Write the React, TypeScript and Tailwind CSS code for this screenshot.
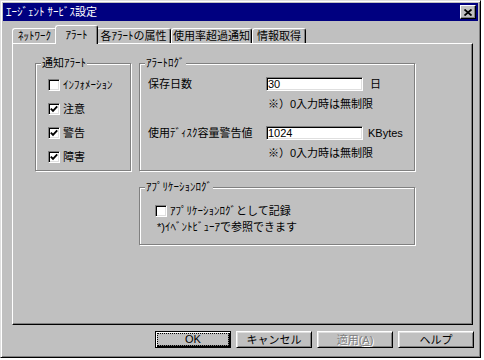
import type { ReactNode } from 'react';

const font = "font-['Liberation_Sans','Noto_Sans_CJK_JP',sans-serif]";

function Check({ checked }: { checked?: boolean }) {
  return (
    <span className="flex h-[12px] w-[12px] shrink-0 items-center justify-center border border-t-[#808080] border-l-[#808080] border-r-white border-b-white bg-white shadow-[inset_1px_1px_0_#000,inset_-1px_-1px_0_#dfdfdf]">
      {checked && (
        <svg width="8" height="8" viewBox="0 0 8 8">
          <path d="M0.8 3.6L3 5.8L7.2 1.4" stroke="#000" strokeWidth="1.9" fill="none" />
        </svg>
      )}
    </span>
  );
}

function Group({ label, className, children }: { label: string; className: string; children: ReactNode }) {
  return (
    <fieldset
      className={`border border-[#808080] shadow-[1px_1px_0_#fff,inset_1px_1px_0_#fff] ${className}`}
    >
      <legend className="ml-[5px] bg-[#c0c0c0] px-[1px] leading-[14px]">{label}</legend>
      {children}
    </fieldset>
  );
}

function Tab({ label, width, active }: { label: string; width: string; active?: boolean }) {
  if (active) {
    return (
      <div
        className={`relative z-10 -mx-[2px] -mb-px flex h-[19px] items-center justify-center rounded-t-[3px] border-t border-l border-r border-t-white border-l-white border-r-black bg-[#c0c0c0] shadow-[inset_-1px_0_0_#808080] ${width}`}
      >
        {label}
      </div>
    );
  }
  return (
    <div
      className={`flex h-[15px] items-center justify-center rounded-t-[3px] border-t border-l border-r border-t-white border-l-white border-r-black shadow-[inset_-1px_0_0_#808080] ${width}`}
    >
      {label}
    </div>
  );
}

function Field({ value }: { value: string }) {
  return (
    <div className="flex h-[14px] w-[97px] items-center border border-t-[#808080] border-l-[#808080] border-r-white border-b-white bg-white pl-[1px] text-[11px] shadow-[inset_1px_1px_0_#000,inset_-1px_-1px_0_#dfdfdf]">
      {value}
    </div>
  );
}

function Button({ children, isDefault, disabled }: { children: ReactNode; isDefault?: boolean; disabled?: boolean }) {
  if (isDefault) {
    return (
      <div className="flex h-[17px] w-[76px] border border-black p-[1px] shadow-[inset_1px_1px_0_#fff,inset_-1px_-1px_0_#000,inset_-2px_-2px_0_#808080]">
        <div className="flex flex-1 items-center justify-center border border-dotted border-black leading-none">
          {children}
        </div>
      </div>
    );
  }
  return (
    <div
      className={`flex h-[17px] w-[76px] items-center justify-center border border-t-white border-l-white border-r-black border-b-black shadow-[inset_1px_1px_0_#dfdfdf,inset_-1px_-1px_0_#808080] ${
        disabled ? 'text-[#808080] [text-shadow:1px_1px_0_#fff]' : ''
      }`}
    >
      {children}
    </div>
  );
}

export default function App() {
  return (
    <div className={`h-[360px] w-[484px] bg-white text-[11px] leading-[14px] text-black ${font}`}>
      <div className="flex h-[358px] w-[481px] flex-col border border-t-[#dfdfdf] border-l-[#dfdfdf] border-r-black border-b-black bg-[#c0c0c0] p-[2px] shadow-[inset_1px_1px_0_#fff,inset_-1px_-1px_0_#808080]">
        {/* title bar */}
        <div className="flex h-[18px] items-center justify-between bg-[#000080] pl-[3px] pr-[2px] text-white">
          <span>ｴｰｼﾞｪﾝﾄ ｻｰﾋﾞｽ設定</span>
          <div className="flex h-[14px] w-[16px] items-center justify-center border border-t-white border-l-white border-r-black border-b-black bg-[#c0c0c0] shadow-[inset_-1px_-1px_0_#808080]">
            <svg width="8" height="7" viewBox="0 0 8 7">
              <path d="M0.5 0.5L7.5 6.5M7.5 0.5L0.5 6.5" stroke="#000" strokeWidth="1.8" />
            </svg>
          </div>
        </div>

        {/* tabs */}
        <div className="ml-[9px] mt-[4px] flex h-[18px] items-end">
          <Tab label="ﾈｯﾄﾜｰｸ" width="w-[45px]" />
          <Tab label="ｱﾗｰﾄ" width="w-[43px]" active />
          <Tab label="各ｱﾗｰﾄの属性" width="w-[75px]" />
          <Tab label="使用率超過通知" width="w-[81px]" />
          <Tab label="情報取得" width="w-[54px]" />
        </div>

        {/* panel */}
        <div className="ml-[9px] h-[282px] w-[461px] border border-t-white border-l-white border-r-black border-b-black pl-[22px] pt-[12px] shadow-[inset_-1px_-1px_0_#808080]">
          <div className="flex">
            <Group label="通知ｱﾗｰﾄ" className="h-[115px] w-[96px]">
              <div className="flex flex-col gap-[8px] pl-[12px] pt-[7px]">
                <label className="flex h-[16px] items-center gap-[3px]">
                  <Check />
                  <span>ｲﾝﾌｫﾒｰｼｮﾝ</span>
                </label>
                <label className="flex h-[16px] items-center gap-[3px]">
                  <Check checked />
                  <span>注意</span>
                </label>
                <label className="flex h-[16px] items-center gap-[3px]">
                  <Check checked />
                  <span>警告</span>
                </label>
                <label className="flex h-[16px] items-center gap-[3px]">
                  <Check checked />
                  <span>障害</span>
                </label>
              </div>
            </Group>

            <Group label="ｱﾗｰﾄﾛｸﾞ" className="ml-[8px] h-[115px] w-[276px]">
              <div className="flex flex-col pl-[8px] pt-[7px]">
                <div className="flex h-[14px] items-center">
                  <span className="w-[118px]">保存日数</span>
                  <Field value="30" />
                  <span className="ml-[7px]">日</span>
                </div>
                <div className="mt-[6px] h-[14px] pl-[120px]">※）0入力時は無制限</div>
                <div className="mt-[15px] flex h-[14px] items-center">
                  <span className="w-[118px]">使用ﾃﾞｨｽｸ容量警告値</span>
                  <Field value="1024" />
                  <span className="ml-[5px]">KBytes</span>
                </div>
                <div className="mt-[6px] h-[14px] pl-[120px]">※）0入力時は無制限</div>
              </div>
            </Group>
          </div>

          <Group label="ｱﾌﾟﾘｹｰｼｮﾝﾛｸﾞ" className="ml-[104px] mt-[9px] h-[65px] w-[276px]">
            <div className="flex flex-col pl-[15px] pt-[9px]">
              <label className="flex h-[16px] items-center gap-[3px]">
                <Check />
                <span>ｱﾌﾟﾘｹｰｼｮﾝﾛｸﾞとして記録</span>
              </label>
              <div className="ml-[2px] mt-[1px] h-[14px]">*)ｲﾍﾞﾝﾄﾋﾞｭｰｱで参照できます</div>
            </div>
          </Group>
        </div>

        {/* buttons */}
        <div className="mt-[6px] flex justify-end gap-[5px] pr-[4px]">
          <Button isDefault>OK</Button>
          <Button>キャンセル</Button>
          <Button disabled>
            適用(<span className="underline">A</span>)
          </Button>
          <Button>ヘルプ</Button>
        </div>
      </div>
    </div>
  );
}
